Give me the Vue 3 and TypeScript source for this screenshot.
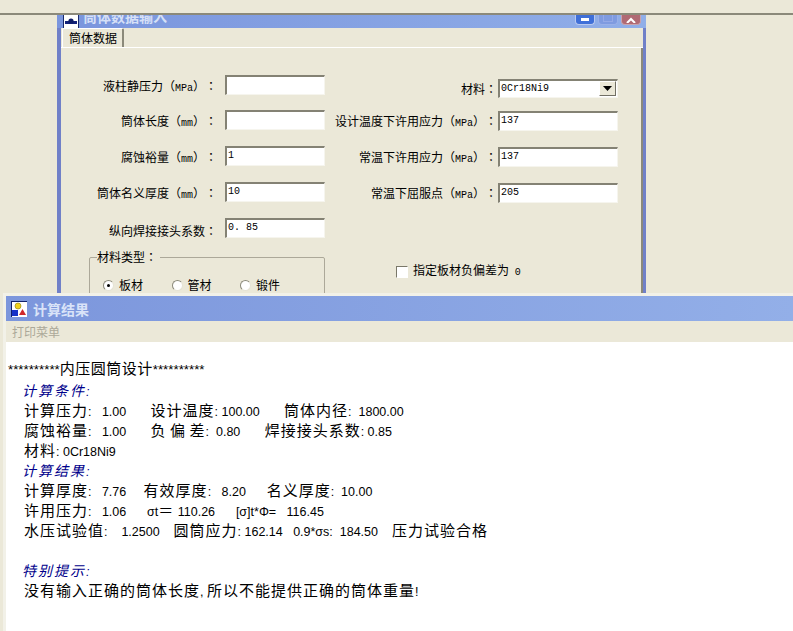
<script setup lang="ts">
interface Field { name: string; unit?: string; value: string }
const LP = '\uFF08'
const RP = '\uFF09'
const CO = '\uFF1A'
const leftFields: Field[] = [
  { name: '液柱静压力', unit: 'MPa', value: '' },
  { name: '筒体长度', unit: 'mm', value: '' },
  { name: '腐蚀裕量', unit: 'mm', value: '1' },
  { name: '筒体名义厚度', unit: 'mm', value: '10' },
  { name: '纵向焊接接头系数', value: '0. 85' },
]
const rightFields: Field[] = [
  { name: '设计温度下许用应力', unit: 'MPa', value: '137' },
  { name: '常温下许用应力', unit: 'MPa', value: '137' },
  { name: '常温下屈服点', unit: 'MPa', value: '205' },
]
const materials = ['板材', '管材', '锻件']

interface Line { text: string; kind?: 'head' }
const lines: Line[] = [
  { text: '**********内压圆筒设计**********', kind: 'head' },
  { text: '计算条件:' },
  { text: '计算压力:   1.00       设计温度: 100.00       筒体内径:  1800.00' },
  { text: '腐蚀裕量:   1.00       负 偏 差:  0.80       焊接接头系数: 0.85' },
  { text: '材料: 0Cr18Ni9' },
  { text: '计算结果:' },
  { text: '计算厚度:   7.76     有效厚度:   8.20      名义厚度:  10.00' },
  { text: '许用压力:   1.06      σt\uFF1D 110.26      [σ]t*Φ=   116.45' },
  { text: '水压试验值:    1.2500    圆筒应力: 162.14   0.9*σs:  184.50    压力试验合格' },
  { text: ' ' },
  { text: '特别提示:' },
  { text: '没有输入正确的筒体长度, 所以不能提供正确的筒体重量!' },
]
const headings = new Set(['计算条件:', '计算结果:', '特别提示:'])

function parts(s: string): { t: string; cjk: boolean }[] {
  const out: { t: string; cjk: boolean }[] = []
  for (const m of s.matchAll(/[\u4e00-\u9fff\uff00-\uffef]+|[^\u4e00-\u9fff\uff00-\uffef]+/g)) {
    out.push({ t: m[0], cjk: /[\u4e00-\u9fff\uff00-\uffef]/.test(m[0]) })
  }
  return out
}
</script>

<template>
  <div class="desktop">
    <div class="topbar"></div>

    <section class="dialog">
      <header class="dlg-title">
        <svg class="dlg-icon" width="16" height="16" viewBox="0 0 16 16">
          <rect x="0.5" y="0.5" width="15" height="15" fill="#fff" stroke="#1a2a6c" />
          <rect x="2" y="8" width="12" height="3" fill="#12217a" />
          <circle cx="8" cy="8" r="2.6" fill="#0d1b66" />
        </svg>
        <span class="dlg-name">筒体数据输入</span>
        <span class="win-btns">
          <span class="wbtn min"><i></i></span>
          <span class="wbtn max"><i></i></span>
          <span class="wbtn close">
            <svg width="12" height="6" viewBox="0 0 12 6"><path d="M2 6 L6 2 L10 6" fill="none" stroke="#fff" stroke-width="2" /></svg>
          </span>
        </span>
      </header>
      <div class="dlg-inner">
        <div class="tabs"><div class="tab">筒体数据</div></div>
        <div class="form">
          <div class="col left">
            <div v-for="f in leftFields" :key="f.name" class="row">
              <div class="label">
                {{ f.name }}<template v-if="f.unit"><span class="punct">{{ LP }}</span><span class="unit">{{ f.unit }}</span><span class="punct">{{ RP }}</span></template><span class="punct">{{ CO }}</span>
              </div>
              <div class="input">{{ f.value }}</div>
            </div>
            <fieldset class="group">
              <legend>材料类型<span class="punct">{{ CO }}</span></legend>
              <div class="radios">
                <div v-for="(m, i) in materials" :key="m" class="radio-item">
                  <span class="radio" :class="{ on: i === 0 }"></span>
                  <span>{{ m }}</span>
                </div>
              </div>
            </fieldset>
          </div>

          <div class="col right">
            <div class="row first">
              <div class="label">材料<span class="punct">{{ CO }}</span></div>
              <div class="input select">
                <span>0Cr18Ni9</span>
                <span class="drop"><svg width="9" height="5" viewBox="0 0 9 5"><path d="M0 0 H9 L4.5 5 Z" fill="#000" /></svg></span>
              </div>
            </div>
            <div v-for="f in rightFields" :key="f.name" class="row">
              <div class="label">
                {{ f.name }}<span class="punct">{{ LP }}</span><span class="unit">{{ f.unit }}</span><span class="punct">{{ RP }}</span><span class="punct">{{ CO }}</span>
              </div>
              <div class="input">{{ f.value }}</div>
            </div>
            <div class="check-row">
              <span class="check"></span>
              <span>指定板材负偏差为 <span class="unit">0</span></span>
            </div>
          </div>
        </div>
      </div>
    </section>

    <section class="result">
      <header class="res-title">
        <svg width="16" height="16" viewBox="0 0 16 16">
          <rect width="16" height="16" fill="#fff" />
          <rect x="0" y="0" width="16" height="1" fill="#10206a" />
          <rect x="0" y="0" width="1" height="16" fill="#10206a" />
          <circle cx="7" cy="5" r="3" fill="#f2d21a" stroke="#8a7a10" stroke-width="0.6" />
          <rect x="1" y="9" width="6" height="6" fill="#1530c8" />
          <path d="M8 14 L11.5 8 L15 14 Z" fill="#d0282a" />
        </svg>
        <span>计算结果</span>
      </header>
      <nav class="menu">打印菜单</nav>
      <div class="output">
        <div
          v-for="(l, i) in lines"
          :key="i"
          class="line"
          :class="{ head: l.kind === 'head', sub: headings.has(l.text) }"
        >
          <span v-for="(p, j) in parts(l.text)" :key="j" :class="p.cjk ? 'cjk' : 'lat'">{{ p.t }}</span>
        </div>
      </div>
    </section>
  </div>
</template>

<style>
html, body { margin: 0; padding: 0; background: #ebe8d8; }
</style>

<style scoped>
.desktop {
  position: relative;
  width: 793px;
  height: 631px;
  overflow: hidden;
  background: #ebe8d8;
  font-family: "Noto Sans CJK SC", "Liberation Sans", sans-serif;
  font-size: 12px;
  color: #000;
  text-spacing-trim: space-all;
}
.topbar {
  height: 13px;
  border-bottom: 2px solid #8b897a;
  box-sizing: content-box;
}

/* dialog window */
.dialog {
  position: absolute;
  left: 57px;
  top: 15px;
  width: 589px;
  height: 280px;
  box-sizing: border-box;
  border-left: 4px solid #7080c8;
  border-right: 3px solid #7080c8;
  background: #ebe8d8;
  display: flex;
  flex-direction: column;
}
.dlg-title {
  margin-left: -4px;
  margin-right: -3px;
  height: 13px;
  flex: none;
  overflow: hidden;
  display: flex;
  align-items: flex-end;
  padding: 0 5px 0 6px;
  background: linear-gradient(90deg, #7a95dd, #90aee8);
  color: #d6e0f7;
}
.dlg-icon { flex: none; margin-bottom: -1px; }
.dlg-name {
  margin-left: 4px;
  font-size: 14px;
  font-weight: 700;
  line-height: 26px;
  height: 26px;
  flex: none;
  transform: translateY(1px);
}
.win-btns {
  margin-left: auto;
  display: flex;
  gap: 3px;
  height: 10px;
  align-self: flex-start;
}
.wbtn {
  width: 20px;
  height: 10px;
  box-sizing: border-box;
  border: 1px solid #b9c9ef;
  border-top: 0;
  border-radius: 0 0 4px 4px;
  display: flex;
  align-items: center;
  justify-content: center;
}
.wbtn.min { background: #3f6fd8; }
.wbtn.min i { width: 8px; height: 3px; background: #fff; margin-top: -1px; }
.wbtn.max { background: #7f9be0; border-color: #9ab0e8; }
.wbtn.max i { width: 10px; height: 7px; border: 1px solid #95a9e6; border-top: 0; box-sizing: border-box; margin-top: -2px; }
.wbtn.close { background: #b06a74; border-color: #c9a3ac; }
.dlg-inner { flex: 1; display: flex; flex-direction: column; min-height: 0; }
.tabs {
  height: 19px;
  flex: none;
  border-bottom: 1px solid #fff;
  padding-left: 1px;
  display: flex;
}
.tab {
  width: 62px;
  height: 19px;
  box-sizing: border-box;
  border-left: 1px solid #fff;
  border-right: 2px solid #8b897a;
  border-top: 1px solid #fff;
  line-height: 17px;
  padding-left: 6px;
  border-radius: 2px 2px 0 0;
}
.form {
  flex: 1;
  display: flex;
  padding-top: 27px;
  border-right: 2px solid #8b897a;
  min-height: 0;
}
.col { display: flex; flex-direction: column; }
.col.left { width: 264px; gap: 16px; flex: none; }
.left .row:first-child { margin-bottom: -1px; }
.col.right { margin-left: 10px; gap: 16px; padding-top: 3px; }
.right .row.first { margin-bottom: -3px; }
.row { display: flex; height: 20px; flex: none; align-items: center; }
.label {
  white-space: nowrap;
  text-align: right;
  line-height: 20px;
  flex: none;
  padding-top: 1px;
}
.left .label { width: 156px; margin-right: 8px; padding-top: 5px; }
.right .label { width: 162px; margin-right: 1px; padding-top: 2px; }
.punct { font-family: "Noto Sans CJK TC", sans-serif; }
.unit { font-family: "Liberation Mono", monospace; font-size: 10px; }
.input {
  box-sizing: border-box;
  width: 100px;
  height: 20px;
  background: #fff;
  border-style: solid;
  border-width: 2px 1px 1px 2px;
  border-color: #848274 #f6f5ee #f6f5ee #848274;
  font-family: "Liberation Mono", monospace;
  font-size: 10px;
  line-height: 15px;
  padding-left: 1px;
  white-space: pre;
}
.right .input { width: 120px; }
.select {
  display: flex;
  justify-content: space-between;
  position: relative;
  height: 19px;
}
.drop {
  width: 17px;
  height: 15px;
  margin-right: 1px;
  box-sizing: border-box;
  background: #ebe8d8;
  border-style: solid;
  border-width: 1px;
  border-color: #fff #716f64 #716f64 #fff;
  display: flex;
  align-items: center;
  justify-content: center;
}
.group {
  margin: -4px 0 0 28px;
  padding: 13px 0 0 13px;
  width: 236px;
  height: 60px;
  box-sizing: border-box;
  border: 1px solid #aca899;
  border-radius: 2px;
  min-inline-size: 0;
}
.group legend { padding: 0 3px 0 0; margin-left: -6px; line-height: 14px; }
.radios { display: flex; }
.radio-item { display: flex; align-items: center; width: 68.5px; gap: 5px; line-height: 16px; }
.radio {
  width: 11px;
  height: 11px;
  box-sizing: border-box;
  border-radius: 50%;
  background: #fff;
  border: 1px solid;
  border-color: #8b897a #e4e2d4 #e4e2d4 #8b897a;
  display: flex;
  align-items: center;
  justify-content: center;
}
.radio.on::after {
  content: "";
  width: 3px;
  height: 3px;
  border-radius: 50%;
  background: #000;
}
.check-row {
  margin: 44px 0 0 61px;
  display: flex;
  align-items: center;
  gap: 5px;
  line-height: 14px;
}
.check-row .unit { margin-left: 3px; }
.check {
  width: 12px;
  height: 12px;
  box-sizing: border-box;
  background: #fff;
  border: 1px solid;
  border-color: #7a7869 #fff #fff #7a7869;
  flex: none;
}

/* result window */
.result {
  position: absolute;
  left: 3px;
  top: 293px;
  width: 790px;
  height: 338px;
  box-sizing: border-box;
  border-top: 3px solid #f2f1e8;
  border-left: 3px solid #f2f1e8;
  background: #fff;
  display: flex;
  flex-direction: column;
}
.res-title {
  height: 25px;
  flex: none;
  background: linear-gradient(90deg, #7c96dc, #93afe8);
  display: flex;
  align-items: center;
  padding-left: 5px;
  gap: 6px;
  color: #d9e3f8;
  font-size: 14px;
  font-weight: 700;
}
.menu {
  height: 21px;
  flex: none;
  background: #ebe8d8;
  color: #aca899;
  padding-left: 6px;
  line-height: 22px;
}
.output {
  flex: 1;
  padding: 16px 0 0 18px;
}
.line {
  height: 20px;
  line-height: 20px;
  white-space: pre;
  display: flex;
  align-items: baseline;
}
.line .cjk { font-size: 15px; letter-spacing: 1px; }
.line .lat { font-family: "Liberation Sans", sans-serif; font-size: 12.5px; }
.line.head { margin-left: -16px; margin-bottom: 2px; }
.line.head .cjk { letter-spacing: 0.5px; }
.line.head .lat { font-size: 13.3px; }
.line.sub { margin-left: -2px; color: #00008b; font-style: italic; }
.line.sub .cjk { font-size: 14px; letter-spacing: 2px; }
</style>
